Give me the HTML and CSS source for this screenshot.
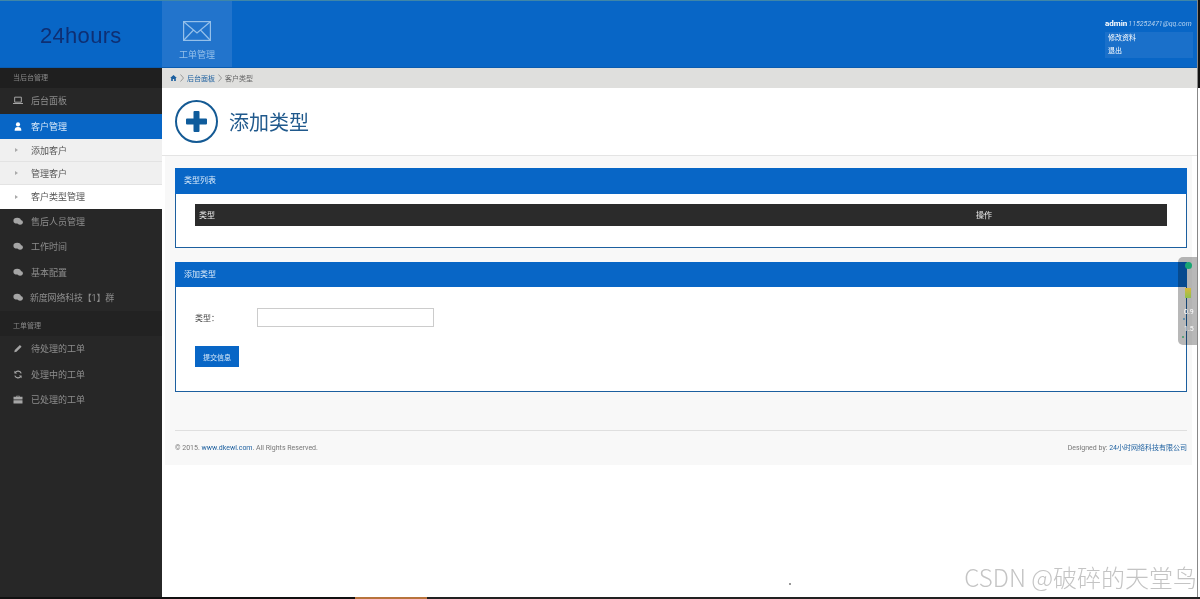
FILE: index.html
```html
<!DOCTYPE html>
<html lang="en">

<head>
  <meta charset="UTF-8" />
  <title>添加类型</title>
  <link rel="stylesheet" href="styles.css">
</head>

<body>

  <div class="topbar">
    <div class="logo">24hours</div>
    <div class="top-nav">
      <svg class="mail-icon" viewBox="0 0 28 20" width="28" height="20">
        <rect x="0.6" y="0.6" width="26.8" height="18.8" fill="none" stroke="currentColor" stroke-width="1.2" />
        <path d="M1 1 L14 12 L27 1 M1 19 L10.5 9 M27 19 L17.5 9" fill="none" stroke="currentColor" stroke-width="1.2" />
      </svg>
      <span>工单管理</span>
    </div>
    <div class="user-box">
      <div class="user-name"><strong>admin</strong><em>115252471@qq.com</em></div>
      <div class="user-link">修改资料</div>
      <div class="user-link">退出</div>
    </div>
  </div>

  <div class="page-body">
    <div class="sidebar">
      <div class="side-title">当后台管理</div>
      <div class="side-item">
        <svg class="side-icon" viewBox="0 0 12 10"><path d="M2 1h8v6H2z" fill="none" stroke="currentColor" stroke-width="1.2" /><path d="M0 8h12v1.2H0z" fill="currentColor" /></svg>
        后台面板
      </div>
      <div class="side-item active">
        <svg class="side-icon" viewBox="0 0 12 12"><circle cx="6" cy="3.2" r="2.8" fill="currentColor" /><path d="M1.5 11.5c0-3.6 1.5-5 4.5-5s4.500 1.400 4.500 5z" fill="currentColor" /></svg>
        客户管理
      </div>
      <div class="sub-menu">
        <div class="sub-item"><i class="caret"></i>添加客户</div>
        <div class="sub-item"><i class="caret"></i>管理客户</div>
        <div class="sub-item current"><i class="caret"></i>客户类型管理</div>
      </div>
      <div class="side-item">
        <svg class="side-icon" viewBox="0 0 12 10"><ellipse cx="5" cy="4" rx="4.500" ry="3.400" fill="currentColor" /><ellipse cx="8.500" cy="6" rx="3.300" ry="2.800" fill="currentColor" /></svg>
        售后人员管理
      </div>
      <div class="side-item">
        <svg class="side-icon" viewBox="0 0 12 10"><ellipse cx="5" cy="4" rx="4.500" ry="3.400" fill="currentColor" /><ellipse cx="8.500" cy="6" rx="3.300" ry="2.800" fill="currentColor" /></svg>
        工作时间
      </div>
      <div class="side-item">
        <svg class="side-icon" viewBox="0 0 12 10"><ellipse cx="5" cy="4" rx="4.500" ry="3.400" fill="currentColor" /><ellipse cx="8.500" cy="6" rx="3.300" ry="2.800" fill="currentColor" /></svg>
        基本配置
      </div>
      <div class="side-item tight">
        <svg class="side-icon" viewBox="0 0 12 10"><ellipse cx="5" cy="4" rx="4.500" ry="3.400" fill="currentColor" /><ellipse cx="8.500" cy="6" rx="3.300" ry="2.800" fill="currentColor" /></svg>
        新度网络科技【1】群
      </div>
      <div class="side-title second">工单管理</div>
      <div class="side-item">
        <svg class="side-icon" viewBox="0 0 12 12"><path d="M1 11l.7-3L8.500 1.200l2.300 2.300L4 10.300z" fill="currentColor" /></svg>
        待处理的工单
      </div>
      <div class="side-item">
        <svg class="side-icon" viewBox="0 0 12 12"><path d="M10.300 4.500A4.600 4.600 0 0 0 2.200 3.500M1.700 7.500a4.600 4.600 0 0 0 8.100 1" fill="none" stroke="currentColor" stroke-width="1.600" /><path d="M1.200 1v3.600h3.600zM10.800 11V7.400H7.200z" fill="currentColor" /></svg>
        处理中的工单
      </div>
      <div class="side-item">
        <svg class="side-icon" viewBox="0 0 12 11"><path d="M4 2V.8h4V2h3.500v3.500H.5V2zM5 1.800h2v-.5H5zM.5 6.300h11V10.500H.5z" fill="currentColor" /></svg>
        已处理的工单
      </div>
    </div>

    <div class="main">
      <div class="breadcrumb">
        <svg class="home-icon" viewBox="0 0 10 9" width="7" height="6"><path d="M5 0L0 4.500h1.500V9h2.500V6h2v3h2.500V4.500H10z" fill="currentColor" /></svg>
        <svg class="crumb-sep" viewBox="0 0 4 8" width="4" height="8"><path d="M.5 .5L3.500 4L.5 7.500" fill="none" stroke="currentColor" stroke-width=".8" /></svg>
        <a>后台面板</a>
        <svg class="crumb-sep" viewBox="0 0 4 8" width="4" height="8"><path d="M.5 .5L3.500 4L.5 7.500" fill="none" stroke="currentColor" stroke-width=".8" /></svg>
        <span>客户类型</span>
      </div>

      <div class="page-head">
        <div class="head-circle">
          <svg viewBox="0 0 21 21" width="21" height="21"><path d="M8.500 0h4a1 1 0 0 1 1 1v6.500H20a1 1 0 0 1 1 1v4a1 1 0 0 1-1 1h-6.500V20a1 1 0 0 1-1 1h-4a1 1 0 0 1-1-1v-6.500H1a1 1 0 0 1-1-1v-4a1 1 0 0 1 1-1h6.500V1a1 1 0 0 1 1-1z" fill="currentColor" /></svg>
        </div>
        <h1>添加类型</h1>
      </div>

      <div class="content">
        <div class="box list-box">
          <h4 class="box-title first">类型列表</h4>
          <div class="box-inner">
            <div class="table-head">
              <span class="col-type">类型</span>
              <span>操作</span>
            </div>
          </div>
        </div>

        <div class="box form-box">
          <h4 class="box-title">添加类型</h4>
          <div class="form-inner">
            <div class="form-row">
              <label>类型：</label>
              <input class="textbox" type="text">
            </div>
            <button class="submit-button">提交信息</button>
          </div>
        </div>

        <div class="footer">
          <div>© 2015. <a>www.dkewl.com</a>. All Rights Reserved.</div>
          <div>Designed by: <a>24小时网络科技有限公司</a></div>
        </div>
      </div>
    </div>
  </div>

  <!-- floating speed widget, sits over the page -->
  <div class="float-widget">
    <i class="dot-green"></i>
    <i class="bar-yellow"></i>
    <span class="num-one">0.9</span>
    <i class="mark-one"></i>
    <span class="num-two">1.5</span>
    <i class="mark-two"></i>
  </div>

  <div class="watermark">CSDN @破碎的天堂鸟</div>
  <i class="speck"></i>
  <div class="edge-right"></div>
  <div class="edge-bottom"></div>

</body>

</html>
```

FILE: styles.css
```css
body {
  margin: 0;
  height: 599px;
  overflow: hidden;
  position: relative;
  background: #fff;
  color: #333;
  font-family: Roboto, "Noto Sans CJK SC", sans-serif;
  font-size: 8px;
}

.topbar {
  display: flex;
  height: 68px;
  background: #0866c6;
  border-top: 1px solid #3f86a8;
  box-sizing: border-box;
  border-bottom: 1px solid #0a5cb0;
}

.logo {
  width: 162px;
  box-sizing: border-box;
  padding: 22px 0 0 40px;
  font-family: "Liberation Sans", sans-serif;
  font-size: 22px;
  letter-spacing: 0.3px;
  color: #0e2f73;
}

.top-nav {
  width: 70px;
  display: flex;
  flex-direction: column;
  align-items: center;
  gap: 7px;
  padding-top: 20px;
  box-sizing: border-box;
  background: #2274cc;
  color: #95c0ea;
  font-size: 9px;
}

.user-box {
  margin-left: auto;
  width: 88px;
  padding-top: 18px;
  margin-right: 7px;
  color: #fff;
}

.user-name {
  display: flex;
  align-items: baseline;
  white-space: nowrap;
  height: 12px;
  margin-bottom: 1px;
}

.user-name strong {
  font-size: 8px;
}

.user-name em {
  margin-left: 1px;
  color: #b5d2ef;
  font-size: 7px;
}

.user-link {
  height: 13px;
  line-height: 13px;
  padding-left: 3px;
  font-size: 7px;
  background: #1a70ca;
}

.page-body {
  display: flex;
  height: 531px;
}

.sidebar {
  width: 162px;
  flex-shrink: 0;
  background: #272727;
  color: #8d8d8d;
  font-size: 9px;
}

.side-title {
  height: 20px;
  line-height: 20px;
  padding-left: 13px;
  font-size: 7px;
  background: #1f1f1f;
  color: #888;
}

.side-title.second {
  height: 25.5px;
  line-height: 30px;
  background: #222;
}

.side-item {
  display: flex;
  align-items: center;
  height: 25.5px;
  padding-left: 13px;
}

.side-item.tight {
  letter-spacing: -0.2px;
}

.side-item.tight .side-icon {
  margin-right: 7px;
}

.side-icon {
  width: 10px;
  height: 9px;
  margin-right: 8px;
  color: #a5a5a5;
}

.side-item.active {
  background: #0866c6;
  color: #d9e9f9;
}

.side-item.active .side-icon {
  color: #fff;
}

.sub-menu {
  background: #f0f0f0;
  color: #555;
}

.sub-item {
  display: flex;
  align-items: center;
  height: 23.2px;
  padding-left: 15px;
  border-bottom: 1px solid #e3e3e3;
  box-sizing: border-box;
}

.sub-item.current {
  background: #fff;
  border-bottom: none;
}

.caret {
  width: 0;
  height: 0;
  margin-right: 13px;
  border-left: 3px solid #aaa;
  border-top: 2.500px solid transparent;
  border-bottom: 2.500px solid transparent;
}

.main {
  flex: 1;
  min-width: 0;
}

.breadcrumb {
  display: flex;
  align-items: center;
  gap: 3px;
  height: 20px;
  padding-left: 8px;
  background: #dfdfdd;
  font-size: 7px;
  color: #666;
}

.breadcrumb a,
.home-icon {
  color: #1c5f9f;
}

.crumb-sep {
  color: #888;
}

.page-head {
  display: flex;
  align-items: center;
  gap: 11px;
  height: 68px;
  padding-left: 13px;
  border-bottom: 1px solid #e4e4e4;
  box-sizing: border-box;
}

.head-circle {
  display: flex;
  align-items: center;
  justify-content: center;
  width: 43px;
  height: 43px;
  box-sizing: border-box;
  border: 2px solid #145a94;
  border-radius: 50%;
  color: #0f5c9c;
}

.page-head h1 {
  margin: 0;
  font-size: 20px;
  font-weight: normal;
  color: #20598c;
}

.content {
  margin: 0 8px 0 3px;
  padding: 12px 5px 0 10px;
  height: 309px;
  box-sizing: border-box;
  background: #f8f8f8;
}

.box {
  border: 1px solid #1c5f9f;
  border-top: none;
  background: #fff;
}

.list-box {
  height: 80px;
  box-sizing: border-box;
}

.form-box {
  height: 130px;
  margin-top: 14px;
  box-sizing: border-box;
}

.box-title {
  margin: 0 -1px;
  height: 25px;
  line-height: 25px;
  padding-left: 9px;
  background: #0866c6;
  color: #dcebfa;
  font-size: 8px;
  font-weight: normal;
}

.box-title.first {
  height: 26px;
}

.box-inner {
  padding: 10px 19px 0;
}

.table-head {
  display: flex;
  align-items: center;
  height: 22px;
  padding: 0 0 2px 4px;
  box-sizing: border-box;
  background: #2b2b2b;
  color: #eee;
  font-size: 8px;
}

.col-type {
  width: 777px;
}

.form-inner {
  padding: 21px 19px 0;
}

.form-row {
  display: flex;
  align-items: center;
  height: 19px;
  margin-bottom: 19px;
}

.form-row label {
  width: 62px;
  font-size: 8px;
  color: #444;
}

.textbox {
  width: 177px;
  height: 19px;
  box-sizing: border-box;
  border: 1px solid #ccc;
  background: #fff;
}

.submit-button {
  display: block;
  width: 44px;
  height: 21px;
  padding: 0;
  border: none;
  background: #0866c6;
  color: #dcebfa;
  font-size: 7px;
  font-family: inherit;
}

.footer {
  display: flex;
  justify-content: space-between;
  margin-top: 38px;
  padding-top: 12px;
  border-top: 1px solid #dfdfdf;
  font-size: 7px;
  line-height: 10px;
  color: #777;
}

.footer a {
  color: #1c5f9f;
}

.float-widget {
  position: absolute;
  right: 0;
  top: 257px;
  width: 22px;
  height: 88px;
  border-radius: 5px 0 0 5px;
  color: #fff;
  font-size: 7px;
}

/* gray panel darkens what is under it, the blue title stays visible */
.float-widget::before {
  content: "";
  position: absolute;
  inset: 0;
  border-radius: 5px 0 0 5px;
  background: #b8b8b8;
  mix-blend-mode: multiply;
}

.dot-green {
  position: absolute;
  left: 7px;
  top: 5px;
  width: 7px;
  height: 7px;
  border-radius: 50%;
  background: #18a673;
}

.bar-yellow {
  position: absolute;
  left: 7px;
  top: 31px;
  width: 6px;
  height: 10px;
  background: linear-gradient(#d9b93a, #8fc04e);
}

.num-one {
  position: absolute;
  left: 6px;
  top: 51px;
}

.num-two {
  position: absolute;
  left: 6px;
  top: 68px;
}

.mark-one,
.mark-two {
  position: absolute;
  width: 2px;
  height: 2px;
  border-radius: 50%;
}

.mark-one {
  left: 5px;
  top: 61px;
  background: #4f86a8;
}

.mark-two {
  left: 4px;
  top: 79px;
  background: #3f9a6a;
}

.watermark {
  position: absolute;
  right: 3px;
  bottom: 5px;
  font-family: "Noto Sans CJK SC", sans-serif;
  font-size: 24px;
  font-weight: 300;
  color: #c4c4c4;
  white-space: nowrap;
}

.speck {
  position: absolute;
  left: 789px;
  top: 583px;
  width: 2px;
  height: 2px;
  background: #999;
}

.edge-right {
  position: absolute;
  right: 0;
  top: 0;
  bottom: 0;
  width: 3px;
  background: linear-gradient(#111 88px, #fff 88px);
  border-left: 1px solid #888;
  box-sizing: border-box;
}

.edge-bottom {
  position: absolute;
  left: 0;
  right: 0;
  bottom: 0;
  height: 2px;
  background: linear-gradient(90deg, #111 355px, #b8743c 355px, #b8743c 427px, #222 427px);
}
```
